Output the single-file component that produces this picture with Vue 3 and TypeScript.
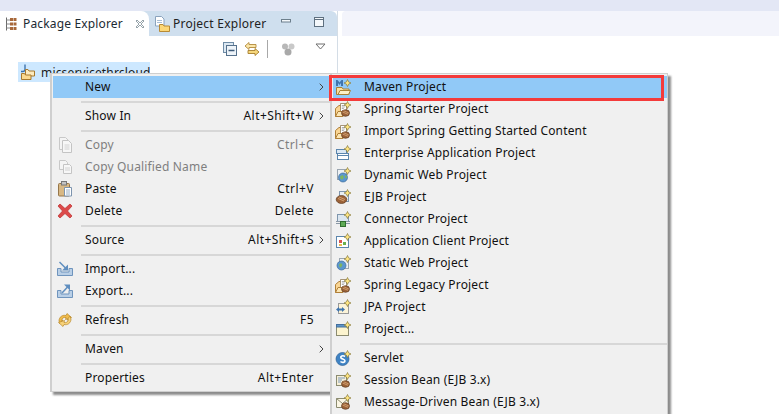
<template>
  <div class="page">
    <div class="topStrip"></div>
    <div class="workbench">
      <section class="leftPanel">
        <div class="tabBar">
          <div class="tab tabActive">
            <svg class="ico" viewBox="0 0 16 16" v-html="icons.pkgExplorer"></svg>
            <span>Package Explorer</span>
            <svg class="closeX" viewBox="0 0 10 10"><path d="M1 2 2 1 5 4 8 1 9 2 6 5 9 8 8 9 5 6 2 9 1 8 4 5Z" fill="#fff" stroke="#7b8b94" stroke-width=".8"/></svg>
          </div>
          <div class="tab">
            <svg class="ico" viewBox="0 0 16 16" v-html="icons.projExplorer"></svg>
            <span>Project Explorer</span>
          </div>
          <div class="winBtns">
            <svg width="12" height="12" viewBox="0 0 12 12"><rect x="1.500" y="3.500" width="9" height="2.500" fill="#f4f8fb" stroke="#6d7f8c"/></svg>
            <svg width="12" height="12" viewBox="0 0 12 12"><rect x="1.500" y="1.500" width="9" height="9" fill="#f4f8fb" stroke="#5e7080"/><path d="M1.500 3.500h9" stroke="#5e7080"/></svg>
          </div>
        </div>
        <div class="toolBar">
          <svg class="ico" viewBox="0 0 16 16" v-html="icons.collapse"></svg>
          <svg class="ico" viewBox="0 0 16 16" v-html="icons.link"></svg>
          <i class="toolSep"></i>
          <svg class="ico" viewBox="0 0 16 16" v-html="icons.balls"></svg>
          <svg class="viewMenu" width="11" height="7" viewBox="0 0 11 7"><path d="M1 1h9L5.500 6Z" fill="#fff" stroke="#6f6f6f"/></svg>
        </div>
        <div class="treeRow">
          <svg class="ico" viewBox="0 0 16 16" v-html="icons.mavenFolder"></svg>
          <span>micservicethrcloud</span>
        </div>
      </section>
      <section class="editorArea">
        <div class="editorHead"></div>
      </section>
    </div>

    <div class="menu mainMenu">
      <template v-for="(m, i) in mainItems" :key="i">
        <div v-if="m.sep" class="sep"></div>
        <div v-else class="row" :class="{ on: m.on, dim: m.dim }">
          <span class="gutter">
            <svg v-if="m.icon" class="ico" viewBox="0 0 16 16" v-html="icons[m.icon]"></svg>
          </span>
          <span class="label">{{ m.label }}</span>
          <span class="keys">{{ m.keys }}</span>
          <svg v-if="m.arrow" class="arrow" width="5" height="8" viewBox="0 0 5 8"><path d="M.7.7 4 4 .7 7.300" fill="none" stroke="#444" stroke-width="1"/></svg>
        </div>
      </template>
    </div>

    <div class="menu subMenu">
      <template v-for="(m, i) in subItems" :key="i">
        <div v-if="m.sep" class="sep"></div>
        <div v-else class="row" :class="{ on: m.on }">
          <span class="gutter">
            <svg class="ico" viewBox="0 0 16 16" v-html="icons[m.icon!]"></svg>
          </span>
          <span class="label">{{ m.label }}</span>
        </div>
      </template>
    </div>
    <div class="redBox"></div>
  </div>
</template>

<script setup lang="ts">
interface Item {
  label?: string
  keys?: string
  icon?: string
  sep?: boolean
  on?: boolean
  dim?: boolean
  arrow?: boolean
}

const star = '<path d="M12.500 .5 13.600 2.900 16 4 13.600 5.100 12.500 7.500 11.400 5.100 9 4 11.400 2.900Z" fill="#ffe680" stroke="#8a7a3a" stroke-width=".7"/>'
const bean = '<ellipse cx="10.500" cy="12" rx="4" ry="3.300" fill="#9c6238" stroke="#5f3b20" stroke-width=".7"/><path d="M7.500 11 13 13.300M8.500 9.700 13.800 12" stroke="#d9a878" stroke-width=".8"/>'
const globe = '<circle cx="8" cy="10.500" r="4.500" fill="#5b97cf" stroke="#3f6c99" stroke-width=".7"/><path d="M5 9.500 7.500 8 9 10 7.500 12.500 5.500 12ZM10 8l2 1.500-.5 2-1.500-1Z" fill="#7fb55f"/>'

const icons: Record<string, string> = {
  pkgExplorer: '<path d="M2.500 1.500v13" stroke="#6a6a6a"/><path d="M2.500 4H6M2.500 8H6M2.500 12H6" stroke="#8a8a8a"/><path d="M6 2h3v3H6zM9.500 2h3v3h-3zM6 6.500h3v3H6zM9.500 6.500h3v3h-3zM6 11h3v3H6zM9.500 11h3v3h-3z" fill="#a8683a"/>',
  projExplorer: '<path d="M1.500 .5h6l2.500 2.500v7h-8.500Z" fill="#fff" stroke="#8ba3bd"/><path d="M3 4.500h5M3 6.500h5" stroke="#a9bdd3"/><path d="M5.500 15.500V8.500h3.500l1 1.500h5.500v5.500Z" fill="#fcd777" stroke="#b78a35"/>',
  collapse: '<rect x="1.500" y="1.500" width="10" height="10" fill="#dce8f2" stroke="#6f8ca6"/><rect x="4.500" y="4.500" width="10" height="10" fill="#eef4f9" stroke="#56718c"/><path d="M6.500 9.500h6" stroke="#3d5a78" stroke-width="1.500"/>',
  link: '<path d="M1 5 5 1.500V3.500H12V6.500H5V8.500Z" fill="#fbe6a8" stroke="#b28a3c" stroke-width=".9"/><path d="M15 11 11 7.500V9.500H4V12.500H11V14.500Z" fill="#f6d77c" stroke="#a67e2e" stroke-width=".9"/>',
  balls: '<circle cx="5" cy="5.500" r="3" fill="#b8b8b8"/><circle cx="11.500" cy="5.500" r="3" fill="#c9c9c9"/><circle cx="8" cy="11" r="3.500" fill="#a9a9a9"/>',
  mavenFolder: '<path d="M5 .5V5.500Q5 7.500 2.500 7.500H1" fill="none" stroke="#3f74ad" stroke-width="1.400"/><path d="M5.500 5.500h2.500l1 1.500h5.500v5h-9Z" fill="#fdebbf" stroke="#a87a2e"/><path d="M1.500 15.500V9.500h3l1 1.500h5.500v4.500Z" fill="#fbd98f" stroke="#a87a2e"/>',
  copy: '<path d="M2.500 .5h6l3 3v9h-9Z" fill="#f4f4f4" stroke="#c8c8c8"/><path d="M5.500 3.500h6l3 3v9h-9Z" fill="#f7f7f7" stroke="#c4c4c4"/><path d="M7.500 8h5M7.500 10h5M7.500 12h5" stroke="#d2d2d2"/>',
  copyQ: '<path d="M2.500 1.500h6l2 2v7h-8Z" fill="#f4f4f4" stroke="#c8c8c8"/><path d="M6.500 5.500h6l2 2v7h-8Z" fill="#f7f7f7" stroke="#c4c4c4"/><path d="M8 9h5M8 11h5" stroke="#d2d2d2"/>',
  paste: '<rect x="1.500" y="2.500" width="11" height="12.500" rx="1" fill="#d8b884" stroke="#96764a"/><rect x="4.500" y=".5" width="5" height="3.500" fill="#c3c3c3" stroke="#777"/><path d="M7.500 6.500h7v8.500h-7Z" fill="#fff" stroke="#7d94ae"/><path d="M9 9h4M9 11h4M9 13h4" stroke="#9ab0c6"/>',
  del: '<path d="M3 1 8 5.500 13 1 15 3 10.500 8 15 13 13 15 8 10.500 3 15 1 13 5.500 8 1 3Z" fill="#dc4a4a" stroke="#bb2f2f" stroke-width=".7"/>',
  importI: '<path d="M.5 7.500v7h15v-7h-3.500v3.500h-8v-3.500Z" fill="#b9cfe6" stroke="#6f94bd"/><path d="M2.500 1 9 7.500" stroke="#5f8ebf" stroke-width="1.500"/><path d="M11 3.500V9.500H5Z" fill="#5f8ebf"/>',
  exportI: '<path d="M.5 7.500v7h15v-7h-3.500v3.500h-8v-3.500Z" fill="#b9cfe6" stroke="#6f94bd"/><path d="M5 10 11 3.500" stroke="#5f8ebf" stroke-width="1.500"/><path d="M7 1.500H13V7.500Z" fill="#5f8ebf"/>',
  refresh: '<path d="M2 9C2 5 5.500 2.500 9 3.500L10 1.500 14.500 5.500 8.500 7.500 9 5.500C7 5 5 6 4.500 8.500L6 8 3 12Z" fill="#f0bb4a" stroke="#b8862a" stroke-width=".7"/><path d="M14 7C14 11 10.500 13.500 7 12.500L6 14.500 1.500 10.500 7.500 8.500 7 10.500C9 11 11 10 11.500 7.500L10 8 13 4Z" fill="#f7d27a" stroke="#b8862a" stroke-width=".7"/>',
  maven: '<path d="M1 1v6h2V4l1.500 2L6 4v3h2V1H6.500L4.500 3.500 2.500 1Z" fill="#3f74ad"/><path d="M1.500 15.500V8.500H7l1 1.500h6v5.500Z" fill="#fbe0a0" stroke="#a88136"/><path d="M3 15.500 5 11.500h10.500L13.500 15.500Z" fill="#fdf0c8" stroke="#a88136"/>' + star,
  spring: '<path d="M.5 15.500V7.500L4 4.500H6.500V15.500Z" fill="#fad694" stroke="#b08039"/><path d="M5.500 2.500h6v8h-6Z" fill="#fff" stroke="#8f7a55" stroke-width=".8"/><path d="M6.800 4.500h3M6.800 6h3M6.800 7.500h2" stroke="#8a8a8a" stroke-width=".7"/><path d="M.5 15.500 3 10.500H8V15.500Z" fill="#fde6b3" stroke="#b08039"/>' + bean + star,
  enterprise: '<rect x="1.500" y="4.500" width="10" height="4" fill="#dbe8f4" stroke="#5c86ad"/><rect x="2.500" y="8.500" width="11" height="6" fill="#fff" stroke="#5c86ad"/><path d="M2.500 10.500h11" stroke="#5c86ad"/>' + star,
  web: '<rect x="2.500" y="2.500" width="9" height="10" fill="#eef1f4" stroke="#9aa5b0"/>' + globe + star,
  ejb: '<rect x="4.500" y="2.500" width="9" height="10" fill="#e8eef4" stroke="#7f96ad"/><ellipse cx="6.500" cy="10.500" rx="5.300" ry="4" fill="#9c6238" stroke="#5f3b20" stroke-width=".7"/><path d="M3 9.500 9 12M4 8 10 10.500" stroke="#d9a878" stroke-width=".9"/>' + star,
  connector: '<rect x="2.500" y="3.500" width="11" height="7" fill="#dbe6f0" stroke="#7f96ad"/><path d="M1 10.500h14M1 12.500h14" stroke="#8a98a5"/><rect x="5.500" y="10.500" width="5" height="5" fill="#5eaa55" stroke="#2f6f2f"/>' + star,
  appClient: '<rect x="1.500" y="3.500" width="12" height="11" fill="#fff" stroke="#5c86ad"/><path d="M4 7h3v3H4z" fill="#d9534f"/><path d="M8 9h3v3H8z" fill="#6ab04c"/><path d="M4 11h3v2H4z" fill="#e9b949"/>' + star,
  staticWeb: '<rect x="4.500" y="3.500" width="9" height="10" fill="#eef1f4" stroke="#9aa5b0"/><circle cx="6.500" cy="10.500" r="4.500" fill="#5b97cf" stroke="#3f6c99" stroke-width=".7"/><path d="M4 9.500 6 8 7.500 10 6 12.500 4.500 12Z" fill="#7fb55f"/>' + star,
  jpa: '<rect x="3.500" y="4.500" width="10" height="10" fill="#fbf3d8" stroke="#9a9a9a"/><path d="M1 10.500 4 8v1.500h3V8L10 10.500 7 13v-1.500H4V13Z" fill="#3f74ad"/>' + star,
  project: '<rect x="1.500" y="3.500" width="12" height="11" fill="#fcf4cf" stroke="#8b8b70"/><rect x="1.500" y="3.500" width="12" height="2.500" fill="#5e94c8" stroke="#44709e"/>' + star,
  servlet: '<circle cx="7.500" cy="9" r="6.500" fill="#3f83c4" stroke="#2d6197" stroke-width=".7"/><path d="M10 6.500C8 5 5 6 6 8c.7 1.300 4 1 4 3 0 1.500-3 2-4.500.5" fill="none" stroke="#fff" stroke-width="1.600"/>' + star,
  session: '<rect x="1.500" y="3.500" width="10" height="10" fill="#f6efd8" stroke="#8b8b70"/><path d="M3 6h7M3 8h4M3 10h3" stroke="#7b98b8"/>' + bean + star,
  mdb: '<path d="M1.500 4.500h12v9h-12Z" fill="#fbf6e4" stroke="#8b8b70"/><path d="M1.500 4.500 7.500 9.500 13.500 4.500" fill="none" stroke="#8b8b70"/>' + bean + star,
}

const mainItems: Item[] = [
  { label: 'New', on: true, arrow: true },
  { sep: true },
  { label: 'Show In', keys: 'Alt+Shift+W', arrow: true },
  { sep: true },
  { label: 'Copy', keys: 'Ctrl+C', dim: true, icon: 'copy' },
  { label: 'Copy Qualified Name', dim: true, icon: 'copyQ' },
  { label: 'Paste', keys: 'Ctrl+V', icon: 'paste' },
  { label: 'Delete', keys: 'Delete', icon: 'del' },
  { sep: true },
  { label: 'Source', keys: 'Alt+Shift+S', arrow: true },
  { sep: true },
  { label: 'Import...', icon: 'importI' },
  { label: 'Export...', icon: 'exportI' },
  { sep: true },
  { label: 'Refresh', keys: 'F5', icon: 'refresh' },
  { sep: true },
  { label: 'Maven', arrow: true },
  { sep: true },
  { label: 'Properties', keys: 'Alt+Enter' },
]

const subItems: Item[] = [
  { label: 'Maven Project', icon: 'maven', on: true },
  { label: 'Spring Starter Project', icon: 'spring' },
  { label: 'Import Spring Getting Started Content', icon: 'spring' },
  { label: 'Enterprise Application Project', icon: 'enterprise' },
  { label: 'Dynamic Web Project', icon: 'web' },
  { label: 'EJB Project', icon: 'ejb' },
  { label: 'Connector Project', icon: 'connector' },
  { label: 'Application Client Project', icon: 'appClient' },
  { label: 'Static Web Project', icon: 'staticWeb' },
  { label: 'Spring Legacy Project', icon: 'spring' },
  { label: 'JPA Project', icon: 'jpa' },
  { label: 'Project...', icon: 'project' },
  { sep: true },
  { label: 'Servlet', icon: 'servlet' },
  { label: 'Session Bean (EJB 3.x)', icon: 'session' },
  { label: 'Message-Driven Bean (EJB 3.x)', icon: 'mdb' },
]
</script>

<style scoped>
.page {
  position: relative;
  width: 779px;
  height: 414px;
  overflow: hidden;
  background: #fff;
  font-family: "Noto Sans", "Open Sans", sans-serif;
  font-size: 12px;
  letter-spacing: 0.16px;
  color: #1a1a1a;
}
.topStrip {
  height: 11px;
  background: #e3e7f5;
}
.workbench {
  display: flex;
  gap: 4px;
}
.ico {
  width: 16px;
  height: 16px;
  flex: none;
}
.leftPanel {
  width: 338px;
  height: 403px;
  flex: none;
  box-sizing: border-box;
  border-right: 1px solid #d4dde6;
}
.tabBar {
  display: flex;
  align-items: stretch;
  height: 25px;
  background: #cfdfee;
  border-radius: 0 6px 0 0;
}
.tab {
  display: flex;
  align-items: center;
  gap: 3px;
  padding-left: 4px;
  color: #222;
}
.tabActive {
  width: 149px;
  box-sizing: border-box;
  background: #fff;
  border-radius: 0 8px 0 0;
  color: #1b2a33;
}
.tab + .tab {
  padding-left: 5px;
  letter-spacing: 0.25px;
}
.closeX {
  width: 10px;
  height: 10px;
  margin-left: 9px;
}
.winBtns {
  margin-left: auto;
  display: flex;
  gap: 21px;
  padding: 5px 12px 0 0;
}
.toolBar {
  display: flex;
  align-items: center;
  justify-content: flex-end;
  gap: 6px;
  height: 26px;
  padding-right: 11px;
}
.toolSep {
  width: 1px;
  height: 18px;
  background: #a8a8a8;
  margin: 0 6px 0 1px;
}
.viewMenu {
  margin: -6px 0 0 13px;
}
.treeRow {
  display: flex;
  align-items: center;
  gap: 5px;
  width: 132px;
  height: 20px;
  margin-left: 18px;
  box-sizing: border-box;
  padding-left: 2px;
  background: #cde8ff;
  white-space: nowrap;
}
.editorArea {
  flex: 1;
}
.editorHead {
  height: 25px;
  background: #f3f4fb;
  border-radius: 4px 0 0 0;
}
.menu {
  position: absolute;
  top: 73px;
  box-sizing: border-box;
  background: #f0f0f0;
  border: 2px solid #cfcfcf;
  border-width: 1px 1px 1px 2px;
  padding: 2px 0 0 1px;
  box-shadow: 3px 3px 2px rgba(0, 0, 0, 0.45);
  color: #111;
}
.mainMenu {
  left: 50px;
  width: 281px;
  height: 319px;
}
.subMenu {
  left: 330px;
  width: 338px;
  height: 360px;
}
.row {
  position: relative;
  display: flex;
  align-items: center;
  height: 22px;
  white-space: nowrap;
}
.gutter {
  display: flex;
  align-items: center;
  width: 32px;
  flex: none;
  padding-left: 4px;
  box-sizing: border-box;
}
.label,
.keys {
  padding-bottom: 2px;
}
.row.on {
  background: #91c9f7;
}
.row.dim {
  color: #7f7f7f;
}
.keys {
  margin-left: auto;
  padding-right: 16px;
  letter-spacing: 0.45px;
}
.arrow {
  position: absolute;
  right: 6px;
}
.sep {
  height: 7px;
  margin-left: 28px;
  position: relative;
}
.sep::after {
  content: "";
  position: absolute;
  left: 0;
  right: 0;
  top: 3px;
  height: 2px;
  background: #d7d7d7;
}
.subMenu .gutter {
  width: 31px;
  padding-left: 2px;
}
.subMenu .sep {
  margin-left: 27px;
}
.redBox {
  position: absolute;
  left: 329px;
  top: 75px;
  width: 335px;
  height: 26px;
  box-sizing: border-box;
  border: 3px solid #f43b3b;
}
</style>

<style>
html, body {
  margin: 0;
  background: #fff;
}
</style>
